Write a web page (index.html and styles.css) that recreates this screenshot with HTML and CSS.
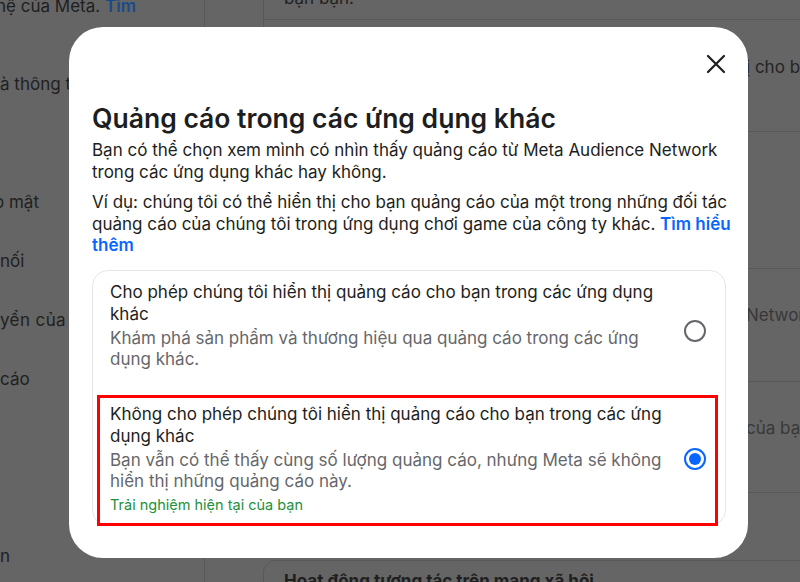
FILE: index.html
```html
<!DOCTYPE html>
<html lang="vi">
<head>
<meta charset="utf-8">
<title>Quảng cáo trong các ứng dụng khác</title>
<link rel="stylesheet" href="styles.css">
</head>
<body>
<div class="page">
  <aside class="sidebar">
    <div class="side-para">hệ của Meta. <span class="side-link">Tìm</span></div>
    <ul class="side-list">
      <li>à thông tin của bạn</li>
      <li></li>
      <li class="shift">o mật</li>
      <li>nối</li>
      <li class="wide">yển của bạn</li>
      <li>cáo</li>
      <li></li>
      <li></li>
      <li>n</li>
    </ul>
  </aside>
  <main class="main">
    <section class="card card-top">
      <div class="row row-first"><span class="row-text">bạn bạn.</span></div>
      <div class="row row-a"><span class="row-text row-text-right dark">ị cho bạn</span></div>
      <div class="row row-b"></div>
      <div class="row row-c"><span class="row-text row-text-right gray">Network</span></div>
      <div class="row row-d"><span class="row-text row-text-right gray">của bạn</span></div>
    </section>
    <section class="card card-bottom">
      <h3 class="card-title">Hoạt động tương tác trên mạng xã hội</h3>
    </section>
  </main>
</div>

<div class="modal" role="dialog" aria-labelledby="modal-title">
  <div class="modal-header">
    <button class="close-btn" aria-label="Đóng">
      <svg width="20" height="20" viewBox="0 0 20 20"><path d="M2 2 L18 18 M18 2 L2 18" stroke="#1c1e21" stroke-width="2.2" stroke-linecap="round" fill="none"/></svg>
    </button>
  </div>
  <h2 class="modal-title" id="modal-title">Quảng cáo trong các ứng dụng khác</h2>
  <p class="modal-text">Bạn có thể chọn xem mình có nhìn thấy quảng cáo từ Meta Audience Network trong các ứng dụng khác hay không.</p>
  <p class="modal-text modal-text-2">Ví dụ: chúng tôi có thể hiển thị cho bạn quảng cáo của một trong những đối tác quảng cáo của chúng tôi trong ứng dụng chơi game của công ty khác. <a class="link" href="#">Tìm hiểu thêm</a></p>

  <div class="options">
    <label class="option option-1">
      <div class="option-body">
        <div class="option-title">Cho phép chúng tôi hiển thị quảng cáo cho bạn trong các ứng dụng khác</div>
        <div class="option-desc">Khám phá sản phẩm và thương hiệu qua quảng cáo trong các ứng dụng khác.</div>
      </div>
      <span class="radio"></span>
    </label>
    <label class="option option-2 highlighted">
      <div class="option-body">
        <div class="option-title">Không cho phép chúng tôi hiển thị quảng cáo cho bạn trong các ứng dụng khác</div>
        <div class="option-desc">Bạn vẫn có thể thấy cùng số lượng quảng cáo, nhưng Meta sẽ không hiển thị những quảng cáo này.</div>
        <div class="option-current">Trải nghiệm hiện tại của bạn</div>
      </div>
      <span class="radio checked"></span>
    </label>
  </div>
</div>
</body>
</html>
```

FILE: styles.css
```css
* { box-sizing: border-box; }

html, body {
  margin: 0;
  padding: 0;
}

body {
  width: 800px;
  height: 582px;
  overflow: hidden;
  background: #656565;
  font-family: Inter, "Noto Sans", "Liberation Sans", sans-serif;
  font-size: 17px;
  position: relative;
}

/* ---------- dimmed background page ---------- */
.page {
  display: flex;
  height: 582px;
}

.sidebar {
  width: 205px;
  flex: none;
  border-right: 1px solid #585858;
  overflow: hidden;
  white-space: nowrap;
  color: #1f1f1f;
}

.side-para {
  line-height: 22px;
  margin-top: -5px;
  margin-left: -4px;
}

.side-link {
  color: #1b4a8a;
  font-weight: 600;
}

.side-list {
  list-style: none;
  margin: 38px 0 0;
  padding: 0;
}

.side-list li {
  height: 59px;
  line-height: 59px;
}

.side-list li.shift {
  margin-left: -6px;
}

.side-list li.wide {
  letter-spacing: 0.4px;
}

.main {
  flex: 1;
  padding-left: 58px;
  min-width: 0;
}

.card {
  width: 700px;
  border: 1px solid #585858;
  border-radius: 12px;
}

.card-top {
  margin-top: -40px;
}

.row {
  padding-left: 20px;
  white-space: nowrap;
  line-height: 22px;
}

.row + .row {
  border-top: 1px solid #585858;
}

.row-first { height: 58px; padding-top: 26px; color: #222; }
.row-a { height: 112px; padding-top: 36px; }
.row-b { height: 137px; }
.row-c { height: 113px; padding-top: 35px; }
.row-d { height: 111px; padding-top: 35px; }

.row-text-right {
  display: inline-block;
  margin-left: 462px;
}

.dark { color: #242424; }
.gray { color: #383838; }

.card-bottom {
  margin-top: 67px;
  height: 80px;
  padding: 9px 20px;
}

.card-title {
  margin: 0;
  font-size: 17px;
  line-height: 22px;
  font-weight: 700;
  color: #1f1f1f;
}

/* ---------- modal ---------- */
.modal {
  position: absolute;
  left: 69px;
  top: 27px;
  width: 679px;
  height: 531px;
  background: #fff;
  border-radius: 34px;
  padding: 17px 14px 0 23px;
  color: #1c1e21;
}

.modal-header {
  display: flex;
  justify-content: flex-end;
  margin-right: -2px;
}

.close-btn {
  width: 40px;
  height: 40px;
  border: 0;
  background: transparent;
  padding: 0;
  display: flex;
  align-items: center;
  justify-content: center;
}

.modal-title {
  margin: 18px 0 0;
  font-size: 26.5px;
  line-height: 32px;
  font-weight: 600;
  letter-spacing: 0;
}

.modal-text {
  margin: 6px 0 0;
  font-size: 17px;
  line-height: 21.5px;
}

.modal-text-2 {
  margin-top: 9px;
}

.link {
  color: #0866ff;
  font-weight: 600;
  text-decoration: none;
}

.options {
  margin-top: 13px;
  width: 634px;
  border: 1px solid #e4e6eb;
  border-radius: 16px;
}

.option {
  position: relative;
  display: flex;
  align-items: center;
  gap: 16px;
  padding: 10px 19px 10px 17px;
}

.option-1 .option-body {
  padding-bottom: 11px;
}

.option-2 {
  padding: 11px 19px 10px 17px;
}

.option-body {
  flex: 1;
  min-width: 0;
}

.option-title {
  font-size: 17px;
  line-height: 22px;
  color: #1c1e21;
}

.option-desc {
  margin-top: 3px;
  font-size: 17px;
  line-height: 21.5px;
  color: #65676b;
}

.option-current {
  margin-top: 2px;
  font-size: 14.5px;
  line-height: 20px;
  color: #23913c;
}

.radio {
  flex: none;
  width: 22px;
  height: 22px;
  border-radius: 50%;
  border: 2px solid #65676b;
  display: flex;
  align-items: center;
  justify-content: center;
}

.radio.checked {
  border: 2.5px solid #0866ff;
}

.radio.checked::before {
  content: "";
  width: 12px;
  height: 12px;
  border-radius: 50%;
  background: #0866ff;
}

/* red annotation frame */
.highlighted::after {
  content: "";
  position: absolute;
  left: 4px;
  right: 7px;
  top: 3px;
  bottom: -1px;
  border: 3px solid #ff0000;
  pointer-events: none;
}
```
